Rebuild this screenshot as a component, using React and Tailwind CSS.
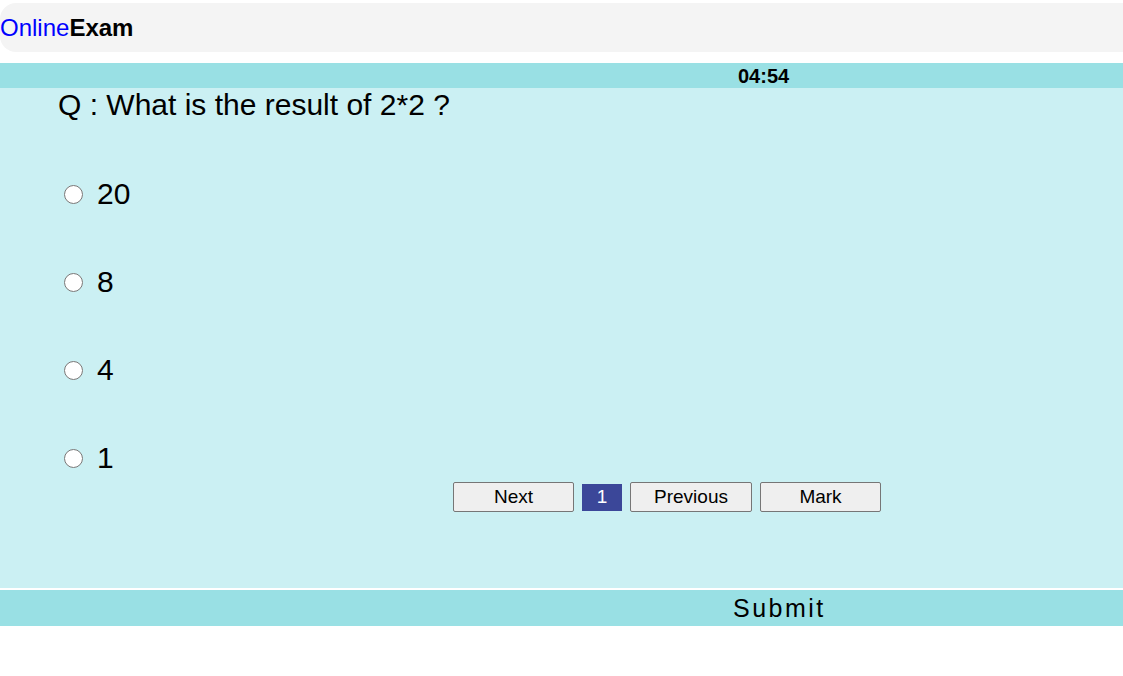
import { useState } from 'react';

const options = ['20', '8', '4', '1'];

export default function App() {
  const [picked, setPicked] = useState(null);

  return (
    <div className="w-full bg-white" style={{ fontFamily: '"Liberation Sans", Arial, sans-serif' }}>
      <div className="pt-[3px]">
        <div className="h-[49px] rounded-l-[16px] bg-[#f4f4f4] flex items-center">
          <span className="text-[24px] leading-[28px]">
            <span className="text-[#0000ff]">Online</span>
            <span className="font-bold text-black">Exam</span>
          </span>
        </div>
      </div>

      <div className="mt-[11px] h-[25px] bg-[#99e0e4] flex items-center pl-[738px]">
        <span className="text-[20px] leading-[24px] font-bold text-black">04:54</span>
      </div>

      <div className="h-[500px] bg-[#cbf0f3]">
        <p className="pl-[58px] text-[30px] leading-[34px] text-black">Q : What is the result of 2*2 ?</p>

        <div className="mt-[57px] flex flex-col gap-[58px] pl-[64px]">
          {options.map((opt) => (
            <label key={opt} className="h-[30px] flex items-center gap-[14px] cursor-pointer">
              <input
                type="radio"
                name="answer"
                checked={picked === opt}
                onChange={() => setPicked(opt)}
                className="m-0 w-[19px] h-[19px]"
              />
              <span className="text-[30px] leading-[30px] text-black">{opt}</span>
            </label>
          ))}
        </div>

        <div className="mt-[9px] pl-[453px] flex items-center gap-[8px]">
          <button className="w-[121px] h-[30px] bg-[#efefef] border border-[#767676] rounded-[2px] text-[19px] text-black">
            Next
          </button>
          <span className="w-[40px] h-[27px] bg-[#3b4799] text-white text-[19px] flex items-center justify-center">
            1
          </span>
          <button className="w-[122px] h-[30px] bg-[#efefef] border border-[#767676] rounded-[2px] text-[19px] text-black">
            Previous
          </button>
          <button className="w-[121px] h-[30px] bg-[#efefef] border border-[#767676] rounded-[2px] text-[19px] text-black">
            Mark
          </button>
        </div>
      </div>

      <div className="mt-[2px] h-[36px] bg-[#99e0e4] flex items-center pl-[733px]">
        <span className="text-[25px] leading-[28px] tracking-[2.5px] text-black">Submit</span>
      </div>
    </div>
  );
}
